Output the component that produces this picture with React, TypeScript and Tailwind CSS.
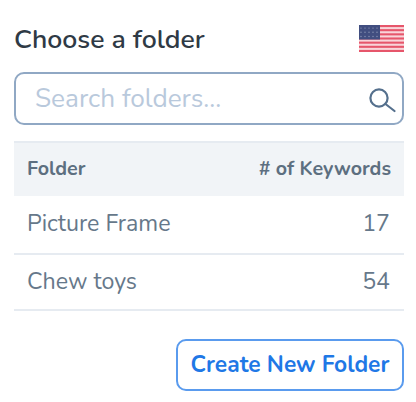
function UsFlag() {
  const stripes = [0, 2, 4, 6, 8, 10, 12]
  const stars = [2, 6, 10, 14, 18]
  return (
    <svg width="45" height="27" viewBox="0 0 45 26" preserveAspectRatio="none">
      <rect width="45" height="26" fill="#f9d5da" />
      {stripes.map((i) => (
        <rect key={i} x="0" y={i * 2} width="45" height="2" fill="#e6566b" />
      ))}
      <rect width="21" height="14" fill="#414e80" />
      {stars.map((x) =>
        [3, 7, 11].map((y) => <circle key={`${x}-${y}`} cx={x} cy={y} r="0.7" fill="#8d96b5" />),
      )}
    </svg>
  )
}

function SearchIcon() {
  return (
    <svg width="28" height="28" viewBox="0 0 28 28" fill="none" stroke="#55708d" strokeWidth="2.2" strokeLinecap="round">
      <circle cx="11" cy="13" r="8.6" />
      <line x1="17.5" y1="19" x2="26.5" y2="26" />
    </svg>
  )
}

export default function App() {
  return (
    <div className="w-[416px] h-[402px] bg-white pl-[14px] pr-[12px] pt-[25px] font-['Nunito','Lato',sans-serif]">
      <div className="flex items-start justify-between h-[47px]">
        <h1 className="text-[26.6px] leading-[28px] font-semibold text-[#2f3a45]">Choose a folder</h1>
        <UsFlag />
      </div>

      <div className="flex items-center h-[53px] border-2 border-[#90a8c4] rounded-[10px] pl-[19px] pr-1.5">
        <span className="flex-1 text-[26.2px] text-[#b9c9dc]">Search folders...</span>
        <SearchIcon />
      </div>

      <table className="w-full mt-[16px] border-collapse">
        <thead>
          <tr className="h-[54px] bg-[#f1f4f7] border-t-2 border-[#e6ebf1] text-[#5d6f80] text-[19.7px]">
            <th className="pl-[13px] pb-[2px] text-left font-bold">Folder</th>
            <th className="pr-[13px] pb-[2px] text-right font-bold"># of Keywords</th>
          </tr>
        </thead>
        <tbody className="text-[23.2px] text-[#66788a]">
          <tr className="h-[58px] border-b-2 border-[#e6ebf1]">
            <td className="pl-[13px]">Picture Frame</td>
            <td className="pr-[14px] text-right">17</td>
          </tr>
          <tr className="h-[56px] border-b-2 border-[#e6ebf1]">
            <td className="pl-[13px]">Chew toys</td>
            <td className="pr-[14px] text-right">54</td>
          </tr>
        </tbody>
      </table>

      <div className="flex justify-end mt-[28px]">
        <button className="w-[228px] h-[52px] border-2 border-[#5a9bee] rounded-[10px] text-[22.8px] font-bold text-[#1f78e6]">
          Create New Folder
        </button>
      </div>
    </div>
  )
}
